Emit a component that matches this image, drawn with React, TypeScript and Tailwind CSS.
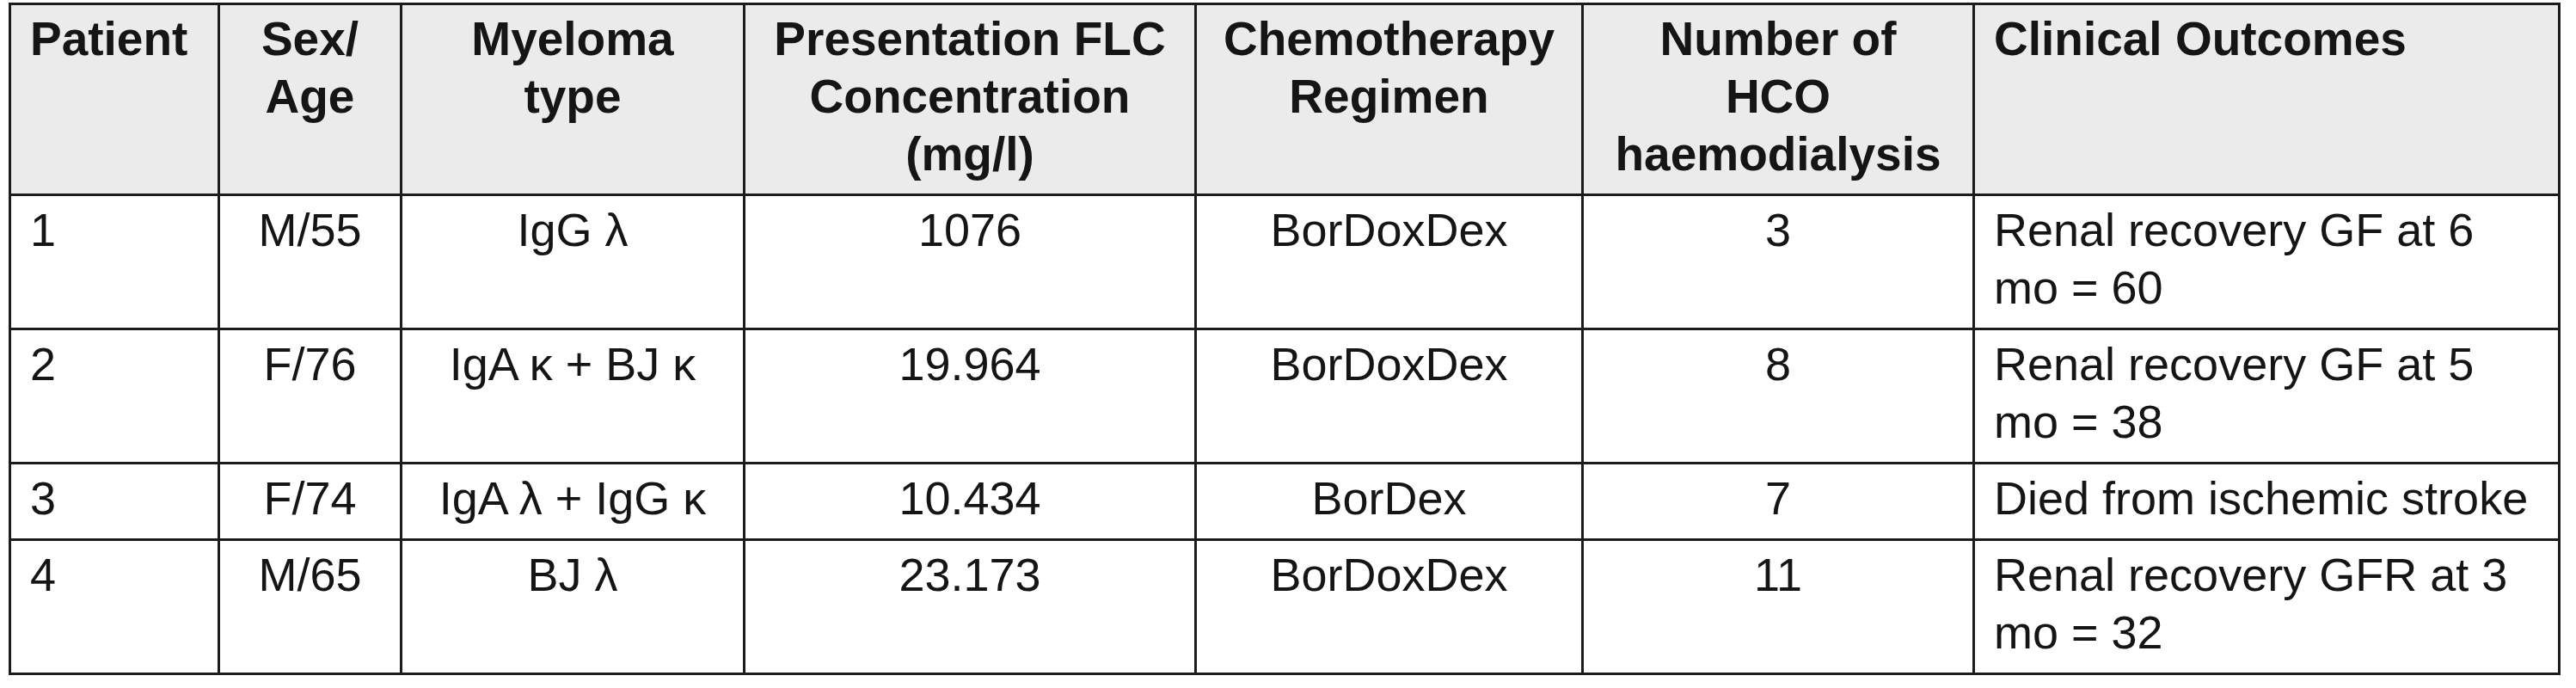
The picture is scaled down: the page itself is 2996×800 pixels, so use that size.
import type { ReactNode } from 'react'

type Align = 'left' | 'center'

interface Column {
  header: ReactNode
  align: Align
}

const columns: Column[] = [
  { header: 'Patient', align: 'left' },
  { header: <>Sex/<br />Age</>, align: 'center' },
  { header: <>Myeloma<br />type</>, align: 'center' },
  { header: <>Presentation FLC<br />Concentration<br />(mg/l)</>, align: 'center' },
  { header: <>Chemotherapy<br />Regimen</>, align: 'center' },
  { header: <>Number of<br />HCO<br />haemodialysis</>, align: 'center' },
  { header: 'Clinical Outcomes', align: 'left' },
]

const rows: ReactNode[][] = [
  ['1', 'M/55', 'IgG λ', '1076', 'BorDoxDex', '3', <>Renal recovery GF at 6<br />mo = 60</>],
  ['2', 'F/76', 'IgA κ + BJ κ', '19.964', 'BorDoxDex', '8', <>Renal recovery GF at 5<br />mo = 38</>],
  ['3', 'F/74', 'IgA λ + IgG κ', '10.434', 'BorDex', '7', 'Died from ischemic stroke'],
  ['4', 'M/65', 'BJ λ', '23.173', 'BorDoxDex', '11', <>Renal recovery GFR at 3<br />mo = 32</>],
]

function Cell({ children, align, head = false }: { children: ReactNode; align: Align; head?: boolean }) {
  const alignCls = align === 'center' ? 'text-center' : 'text-left'
  const headCls = head ? 'bg-[#ebebeb] font-bold text-[55px] pb-[12px]' : 'bg-white text-[54px] pb-[13px]'
  return (
    <div
      className={`border-r-[3px] border-b-[3px] border-[#1c1c1c] px-[22px] pt-[6px] leading-[67px] whitespace-nowrap text-[#151515] ${alignCls} ${headCls}`}
    >
      {children}
    </div>
  )
}

export default function App() {
  return (
    <div className="w-[2996px] h-[800px] bg-white pt-[3px] pl-[10px] font-['Liberation_Sans',Arial,sans-serif]">
      <div className="grid w-fit grid-cols-[243px_212px_399px_525px_450px_455px_681px] border-l-[3px] border-t-[3px] border-[#1c1c1c]">
        {columns.map((col, i) => (
          <Cell key={`h${i}`} align={col.align} head>
            {col.header}
          </Cell>
        ))}
        {rows.map((row, r) =>
          row.map((value, c) => (
            <Cell key={`${r}-${c}`} align={columns[c].align}>
              {value}
            </Cell>
          )),
        )}
      </div>
    </div>
  )
}
